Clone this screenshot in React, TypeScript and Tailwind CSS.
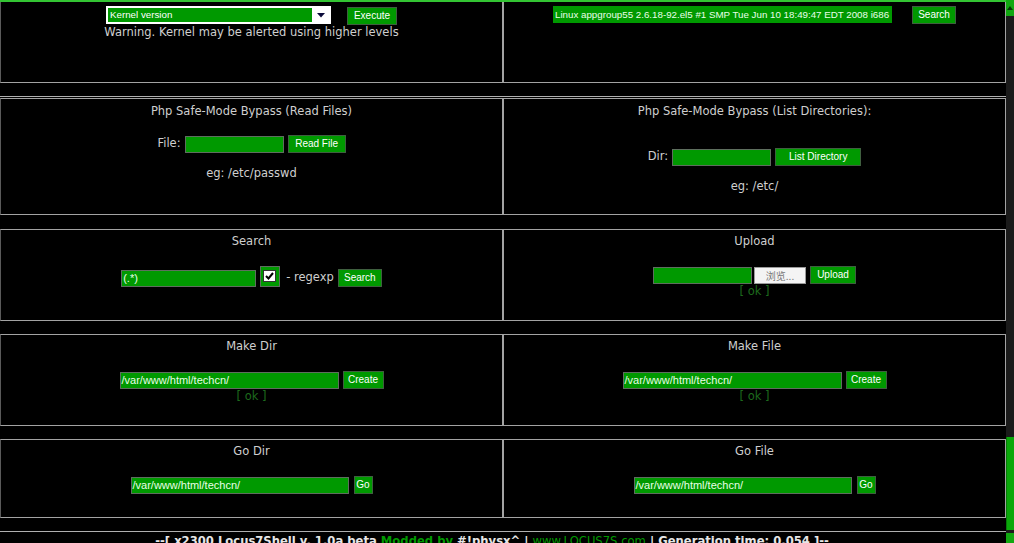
import React from "react";

const title =
  "text-[11.5px] leading-[13px] text-[#cfcfcf] font-['DejaVu_Sans',sans-serif] whitespace-nowrap";
const btn =
  "h-[18px] bg-[#009900] border border-[#3f5f3f] text-white text-[10px] leading-none font-['Liberation_Sans',Arial,sans-serif] flex items-center justify-center whitespace-nowrap";
const field =
  "h-[17px] bg-[#009900] border border-[#5e6e5e] text-[#e8ffe8] leading-none font-['Liberation_Sans',Arial,sans-serif] flex items-center pl-[1px] whitespace-nowrap overflow-hidden";
const ok =
  "text-[11.5px] leading-[13px] text-[#1d6b1d] font-['DejaVu_Sans',sans-serif] whitespace-nowrap";

function Cell({
  children,
  side,
  top = true,
  className = "",
}: {
  children?: React.ReactNode;
  side: "l" | "r";
  top?: boolean;
  className?: string;
}) {
  return (
    <div
      className={
        "h-full border-b border-r border-[#a3a3a3] flex flex-col items-center " +
        (side === "l" ? "border-l border-l-[#5a5a5a] " : "border-l ") +
        (top ? "border-t " : "") +
        className
      }
    >
      {children}
    </div>
  );
}

function Check() {
  return (
    <div className="w-[20px] h-[21px] bg-[#009900] border border-[#5e6e5e] flex items-start justify-start">
      <div className="ml-[2px] mt-[3px] w-[13px] h-[12px] bg-white border border-[#333] flex items-center justify-center">
        <svg width="9" height="8" viewBox="0 0 9 8">
          <path d="M1 4 L3.5 6.5 L8 1" stroke="#000" strokeWidth="2" fill="none" />
        </svg>
      </div>
    </div>
  );
}

export default function App() {
  return (
    <div className="w-[1014px] h-[543px] overflow-hidden bg-black flex">
      <div className="w-[1006px] shrink-0">
        <div className="h-[2px] bg-[#33c433]" />

        {/* Row 1 */}
        <div className="h-[81px] grid grid-cols-[503px_503px]">
          <Cell side="l" top={false} className="pt-[4px]">
            <div className="flex items-start gap-[16px]">
              <div className="w-[225px] h-[18px] border-2 border-white flex">
                <div className="flex-1 bg-[#009900] text-white text-[9.75px] leading-none font-['Liberation_Sans',Arial,sans-serif] flex items-center pl-[2px]">
                  Kernel version
                </div>
                <div className="w-[17px] bg-white flex items-center justify-center">
                  <svg width="8" height="5" viewBox="0 0 8 5">
                    <path d="M0 0 H8 L4 4.5 Z" fill="#0a0a3a" />
                  </svg>
                </div>
              </div>
              <div className={btn + " w-[50px] h-[17px] mt-[1px]"}>Execute</div>
            </div>
            <div className={title + " mt-[1px]"}>
              Warning. Kernel may be alerted using higher levels
            </div>
          </Cell>
          <Cell side="r" top={false} className="pt-[4px]">
            <div className="flex items-start gap-[20px]">
              <div className={field + " w-[339px] border-0 text-[9.75px] pl-[2px]"}>
                Linux appgroup55 2.6.18-92.el5 #1 SMP Tue Jun 10 18:49:47 EDT 2008 i686
              </div>
              <div className={btn + " w-[44px] h-[17px]"}>Search</div>
            </div>
          </Cell>
        </div>

        <div className="h-[13px]" />
        <div className="h-[1px] bg-[#b0b0b0]" />
        <div className="h-[1px]" />

        {/* Row 2 */}
        <div className="h-[117px] grid grid-cols-[503px_503px]">
          <Cell side="l" className="pt-[6px]">
            <div className={title}>Php Safe-Mode Bypass (Read Files)</div>
            <div className="mt-[17px] flex items-end gap-[4px]">
              <div className={title + " mb-[3px]"}>File:</div>
              <div className={field + " w-[99px]"} />
              <div className={btn + " w-[58px]"}>Read File</div>
            </div>
            <div className={title + " mt-[14px]"}>eg: /etc/passwd</div>
          </Cell>
          <Cell side="r" className="pt-[6px]">
            <div className={title}>Php Safe-Mode Bypass (List Directories):</div>
            <div className="mt-[30px] flex items-end gap-[4px]">
              <div className={title + " mb-[3px]"}>Dir:</div>
              <div className={field + " w-[99px]"} />
              <div className={btn + " w-[86px]"}>List Directory</div>
            </div>
            <div className={title + " mt-[14px]"}>eg: /etc/</div>
          </Cell>
        </div>

        <div className="h-[14px]" />

        {/* Row 3 */}
        <div className="h-[92px] grid grid-cols-[503px_503px]">
          <Cell side="l" className="pt-[5px]">
            <div className={title}>Search</div>
            <div className="mt-[18px] flex items-end">
              <div className={field + " w-[135px] text-[11px]"}>(.*)</div>
              <div className="ml-[4px]">
                <Check />
              </div>
              <div className={title + " ml-[6px] mb-[3px]"}>- regexp</div>
              <div className={btn + " w-[44px] ml-[4px]"}>Search</div>
            </div>
          </Cell>
          <Cell side="r" className="pt-[5px]">
            <div className={title}>Upload</div>
            <div className="mt-[18px] flex items-end">
              <div className={field + " w-[99px]"} />
              <div className="ml-[2px] w-[52px] h-[17px] bg-[#f4f4f4] border border-[#9a9a9a] text-[#777] text-[10px] leading-none font-['Noto_Sans_CJK_SC',sans-serif] flex items-center justify-center">
                浏览...
              </div>
              <div className={btn + " w-[46px] ml-[4px]"}>Upload</div>
            </div>
            <div className={ok + " mt-[1px]"}>[ ok ]</div>
          </Cell>
        </div>

        <div className="h-[13px]" />

        {/* Row 4 */}
        <div className="h-[92px] grid grid-cols-[503px_503px]">
          <Cell side="l" className="pt-[5px]">
            <div className={title}>Make Dir</div>
            <div className="mt-[18px] flex items-end gap-[4px]">
              <div className={field + " w-[219px] text-[11px]"}>/var/www/html/techcn/</div>
              <div className={btn + " w-[41px]"}>Create</div>
            </div>
            <div className={ok + " mt-[1px]"}>[ ok ]</div>
          </Cell>
          <Cell side="r" className="pt-[5px]">
            <div className={title}>Make File</div>
            <div className="mt-[18px] flex items-end gap-[4px]">
              <div className={field + " w-[219px] text-[11px]"}>/var/www/html/techcn/</div>
              <div className={btn + " w-[41px]"}>Create</div>
            </div>
            <div className={ok + " mt-[1px]"}>[ ok ]</div>
          </Cell>
        </div>

        <div className="h-[13px]" />

        {/* Row 5 */}
        <div className="h-[79px] grid grid-cols-[503px_503px]">
          <Cell side="l" className="pt-[5px]">
            <div className={title}>Go Dir</div>
            <div className="mt-[18px] flex items-end gap-[5px]">
              <div className={field + " w-[218px] text-[11px]"}>/var/www/html/techcn/</div>
              <div className={btn + " w-[19px]"}>Go</div>
            </div>
          </Cell>
          <Cell side="r" className="pt-[5px]">
            <div className={title}>Go File</div>
            <div className="mt-[18px] flex items-end gap-[5px]">
              <div className={field + " w-[218px] text-[11px]"}>/var/www/html/techcn/</div>
              <div className={btn + " w-[19px]"}>Go</div>
            </div>
          </Cell>
        </div>

        <div className="h-[13px]" />
        <div className="h-[1px] bg-[#b0b0b0]" />
        <div className="pt-[3px] pr-[22px] text-center text-[11.6px] leading-[13px] font-bold text-[#e6e6e6] font-['DejaVu_Sans',sans-serif] whitespace-nowrap">
          --[ x2300 Locus7Shell v. 1.0a beta <span className="text-[#009900]">Modded by</span> #!physx^ |{" "}
          <span className="text-[#009900] font-normal">www.LOCUS7S.com</span> | Generation time: 0.054 ]--
        </div>
      </div>

      {/* Scrollbar */}
      <div className="w-[8px] flex flex-col bg-[#1b1b1b]">
        <div className="h-[16px] shrink-0 bg-[#11a811] flex items-center justify-center">
          <svg width="6" height="4" viewBox="0 0 6 4">
            <path d="M0 4 L3 0 L6 4 Z" fill="#063806" />
          </svg>
        </div>
        <div className="flex-1 flex flex-col">
          <div className="h-[421px] shrink-0" />
          <div className="h-[93px] shrink-0 bg-[#0aa80a] border-l border-[#077a07]" />
        </div>
        <div className="h-[10px] shrink-0 mt-[3px] bg-[#11a811]" />
      </div>
    </div>
  );
}
